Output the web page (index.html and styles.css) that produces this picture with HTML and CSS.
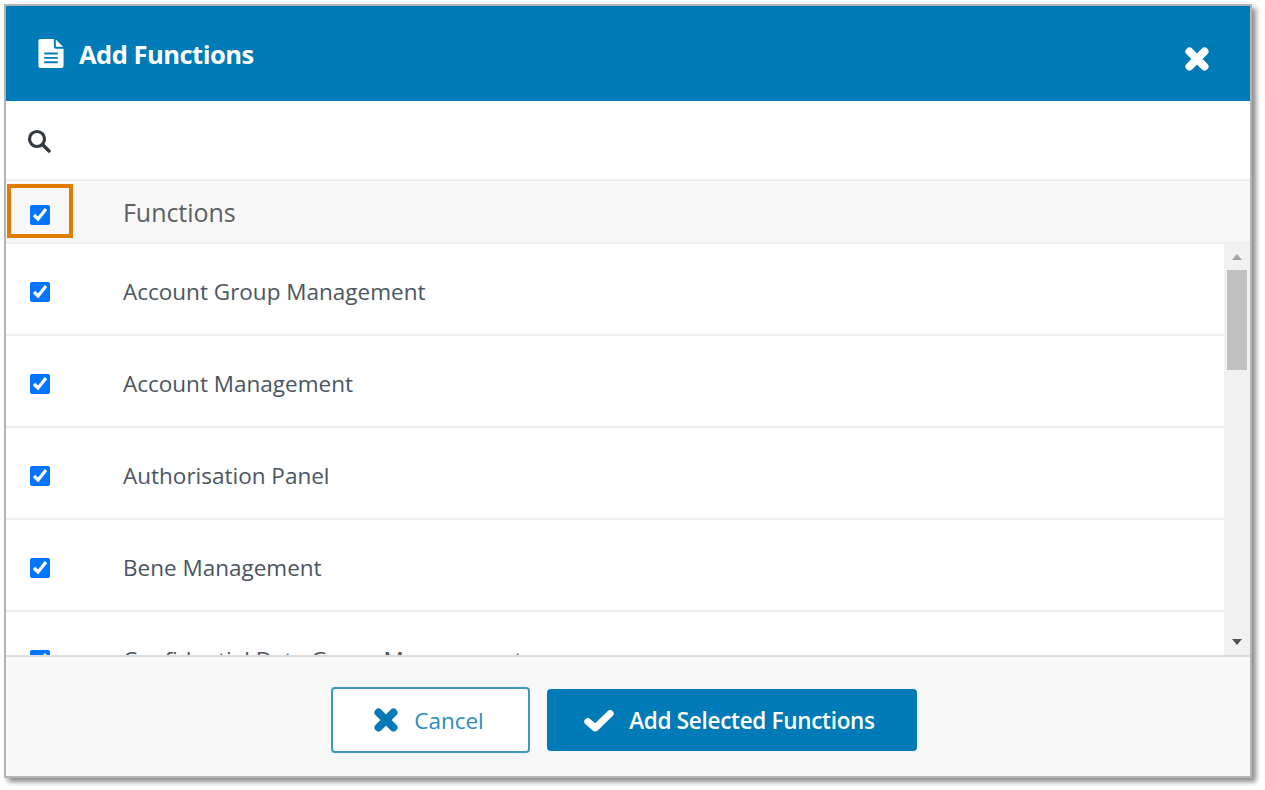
FILE: index.html
```html
<!DOCTYPE html>
<html lang="en">
<head>
<meta charset="utf-8">
<title>Add Functions</title>
<link rel="stylesheet" href="styles.css">
</head>
<body>
<div class="dialog">
  <header class="titlebar">
    <h1 class="title">
      <svg class="doc-icon" viewBox="0 0 26 30" aria-hidden="true"><path fill="#fff" fill-rule="evenodd" d="M2 0h14v8a2 2 0 0 0 2 2h8v18a2 2 0 0 1-2 2H2a2 2 0 0 1-2-2V2a2 2 0 0 1 2-2zM18 0.5 25.5 8H18zM6 14v2h14v-2zM6 18.500v2h14v-2zM6 23v2h14v-2z"/></svg>
      Add Functions
    </h1>
    <svg class="close-icon" viewBox="0 0 24 24" aria-hidden="true"><path d="M4.500 4.500 19.500 19.500M19.500 4.500 4.500 19.500" stroke="#fff" stroke-width="8" stroke-linecap="round"/></svg>
  </header>
  <div class="search">
    <svg class="search-icon" viewBox="0 0 24 24" aria-hidden="true"><circle cx="10" cy="10" r="7.500" fill="none" stroke="#343a40" stroke-width="3.200"/><path d="M15.500 15.500 22 22" stroke="#343a40" stroke-width="3.500" stroke-linecap="round"/></svg>
  </div>
  <div class="head-row">
    <div class="check-cell highlight"><input type="checkbox" class="check" checked></div>
    <span class="head-label">Functions</span>
  </div>
  <div class="body">
    <ul class="list">
      <li class="row"><div class="check-cell"><input type="checkbox" class="check" checked></div><span class="label">Account Group Management</span></li>
      <li class="row"><div class="check-cell"><input type="checkbox" class="check" checked></div><span class="label">Account Management</span></li>
      <li class="row"><div class="check-cell"><input type="checkbox" class="check" checked></div><span class="label">Authorisation Panel</span></li>
      <li class="row"><div class="check-cell"><input type="checkbox" class="check" checked></div><span class="label">Bene Management</span></li>
      <li class="row"><div class="check-cell"><input type="checkbox" class="check" checked></div><span class="label">Confidential Data Group Management</span></li>
    </ul>
    <div class="scrollbar">
      <svg class="arrow" viewBox="0 0 10 6" aria-hidden="true"><path d="M0 6 5 0l5 6z" fill="#a3a3a3"/></svg>
      <div class="track"><div class="thumb"></div></div>
      <svg class="arrow" viewBox="0 0 10 6" aria-hidden="true"><path d="M0 0l5 6 5-6z" fill="#505050"/></svg>
    </div>
  </div>
  <footer class="footer">
    <button class="btn btn-outline" type="button">
      <svg class="btn-x" viewBox="0 0 24 24" aria-hidden="true"><path d="M4.500 4.500 19.500 19.500M19.500 4.500 4.500 19.500" stroke="#007bb8" stroke-width="8" stroke-linecap="round"/></svg>
      Cancel
    </button>
    <button class="btn btn-solid" type="button">
      <svg class="btn-check" viewBox="0 0 30 24" aria-hidden="true"><path d="M4.500 13.500 11.500 19.500 25.500 6" fill="none" stroke="#fff" stroke-width="6.500" stroke-linecap="round" stroke-linejoin="round"/></svg>
      Add Selected Functions
    </button>
  </footer>
</div>
</body>
</html>
```
FILE: styles.css
```css
* { box-sizing: border-box; }
html, body { height: 100%; }
body {
  margin: 0;
  padding: 4px 0 0 4px;
  background: #fff;
  font-family: "Open Sans", "Noto Sans", sans-serif;
  overflow: hidden;
}
.dialog {
  width: 1248px;
  height: 774px;
  border: 2px solid #b4b4b4;
  background: #fff;
  box-shadow: 4px 4px 5px #8c8c8c;
  display: flex;
  flex-direction: column;
}
.titlebar {
  height: 95px;
  flex: none;
  background: #007bb8;
  display: flex;
  align-items: center;
  justify-content: space-between;
  padding: 0 41px 0 32px;
  color: #fff;
}
.title {
  margin: 0;
  display: flex;
  align-items: center;
  gap: 15px;
  font-size: 25.500px;
  font-weight: 700;
  letter-spacing: -0.5px;
}
.doc-icon { width: 26px; height: 29px; }
.close-icon { width: 24px; height: 24px; margin-top: 10px; }
.search {
  height: 80px;
  flex: none;
  display: flex;
  align-items: center;
  padding: 2px 0 0 21px;
  border-bottom: 2px solid #eeeeee;
}
.search-icon { width: 24px; height: 24px; }
.head-row {
  height: 63px;
  flex: none;
  display: flex;
  align-items: center;
  background: #f8f8f8;
  border-bottom: 2px solid #eeeeee;
}
.check-cell {
  width: 117px;
  flex: none;
  display: flex;
  align-items: center;
  padding: 6px 0 0 24px;
}
.highlight { position: relative; height: 100%; }
.highlight::after {
  content: "";
  box-sizing: border-box;
  position: absolute;
  left: 1px;
  top: 3px;
  width: 66px;
  height: 54px;
  border: 4px solid #e07c00;
}
.check { width: 20px; height: 20px; margin: 0; }
.head-label { font-size: 25px; color: #5a5f63; letter-spacing: -0.05px; }
.body {
  flex: 1;
  min-height: 0;
  display: flex;
}
.list {
  flex: 1;
  margin: 0;
  padding: 0;
  list-style: none;
  overflow: hidden;
}
.row {
  height: 92px;
  display: flex;
  align-items: center;
  border-bottom: 2px solid #eeeeee;
}
.label { font-size: 22.500px; color: #4a5560; padding-top: 4px; }
.scrollbar {
  width: 26px;
  flex: none;
  background: #f1f1f1;
  display: flex;
  flex-direction: column;
  align-items: center;
  padding: 10px 0;
}
.arrow { width: 10px; height: 6px; flex: none; }
.track { flex: 1; width: 100%; padding: 10px 3px 0; }
.thumb { height: 100px; background: #c1c1c1; }
.footer {
  height: 121px;
  flex: none;
  background: #f8f8f8;
  border-top: 2px solid #dddddd;
  display: flex;
  align-items: center;
  justify-content: center;
  gap: 17px;
  padding: 7px 8px 0 0;
}
.btn {
  font: inherit;
  font-size: 22.500px;
  display: flex;
  align-items: center;
  justify-content: center;
  border-radius: 4px;
  margin: 0;
}
.btn-outline {
  width: 199px;
  height: 66px;
  padding: 0 3px 0 0;
  background: #fff;
  border: 2px solid #3f96c6;
  color: #2a8cc0;
  gap: 16px;
}
.btn-solid {
  width: 370px;
  height: 62px;
  padding: 0 6px 0 0;
  background: #007bb8;
  border: 0;
  color: #fff;
  gap: 14px;
  font-weight: 600;
  letter-spacing: -0.3px;
}
.btn-x { width: 24px; height: 24px; }
.btn-check { width: 32px; height: 26px; }
```
